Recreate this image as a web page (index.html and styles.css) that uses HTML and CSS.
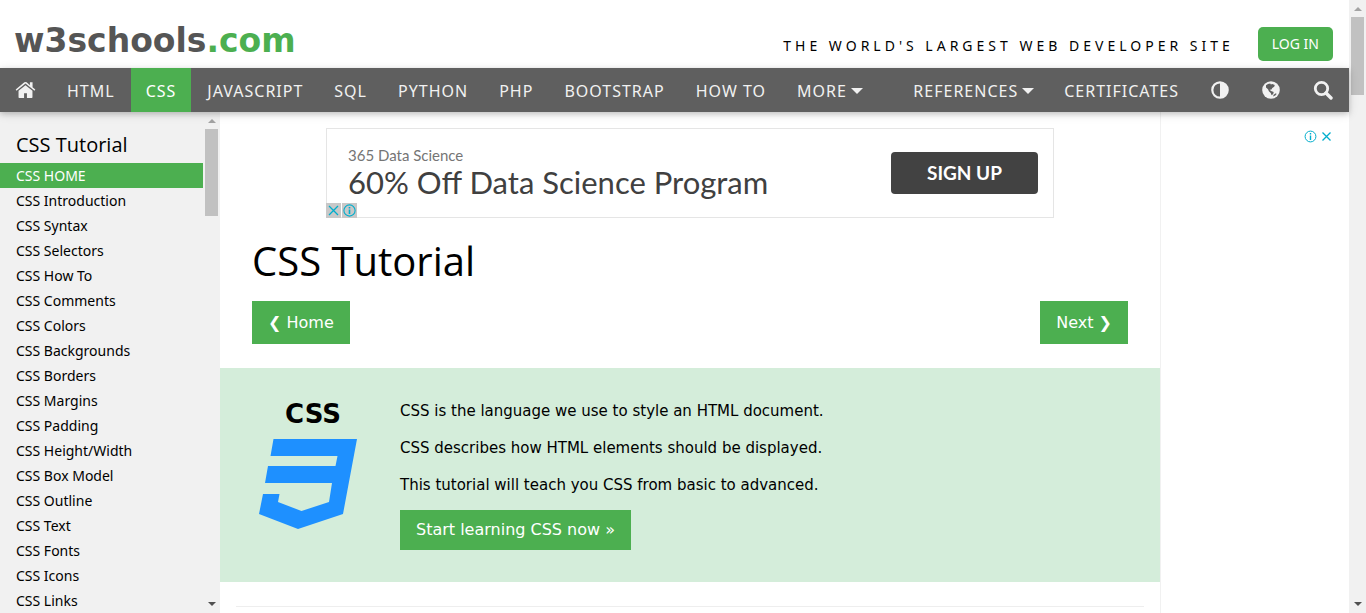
FILE: index.html
```
<!DOCTYPE html>
<html lang="en">
<head>
<meta charset="utf-8">
<title>CSS Tutorial</title>
<link rel="stylesheet" href="styles.css">
</head>
<body>
<div class="window">
  <div class="page">
    <header class="header">
      <a class="logo" href="#">w3schools<span class="logo-dot">.com</span></a>
      <div class="header-right">
        <span class="tagline">THE WORLD'S LARGEST WEB DEVELOPER SITE</span>
        <button class="login" type="button">LOG IN</button>
      </div>
    </header>

    <nav class="topnav" aria-label="Main">
      <div class="nav-group sections">
        <a class="nav-icon" href="#" aria-label="Home"><svg width="21" height="18" viewBox="0 0 22 18" fill="currentColor"><path d="M11 3.900 3.700 9.900v6.700q0 .8.8.8h5v-5h3v5h5q.8 0 .8-.8V9.900z"/><path d="M21.300 8.600 18.400 6.200V1h-2.800v2.900L12.200 1Q11 .1 9.800 1L.7 8.600l.9 1.200L11 2.100l9.400 7.700z"/></svg></a>
        <a href="#">HTML</a>
        <a class="current" href="#">CSS</a>
        <a href="#">JAVASCRIPT</a>
        <a href="#">SQL</a>
        <a href="#">PYTHON</a>
        <a href="#">PHP</a>
        <a href="#">BOOTSTRAP</a>
        <a href="#">HOW TO</a>
        <a href="#">MORE<span class="caret"></span></a>
      </div>
      <div class="nav-group">
        <a href="#">REFERENCES<span class="caret"></span></a>
        <a href="#">CERTIFICATES</a>
        <a class="nav-icon wide" href="#" aria-label="Contrast"><svg width="18" height="18" viewBox="0 0 18 18"><circle cx="9" cy="9" r="7.700" fill="none" stroke="currentColor" stroke-width="2.200"/><path d="M9 1.500a7.500 7.500 0 0 1 0 15z" fill="currentColor"/></svg></a>
        <a class="nav-icon wide" href="#" aria-label="Translate"><svg width="18" height="18" viewBox="0 0 18 18"><circle cx="9" cy="9" r="8.800" fill="currentColor"/><path class="land" d="M4 4.200 6 3l2.200-.6.700 1.100L10.300 3l2.500 1-.6 1.700-1.900 1.300-.8 1.500-1.900.3 1.500 1.300 2.600.9-.5 1.900-1.600 1.300-.9-2.300-1.800-1.600-.9-2L4 6.600zM11.600 13.800l2.300-1.600.7.900-1.300 1.500-2.200 1z"/></svg></a>
        <a class="nav-icon wide" href="#" aria-label="Search"><svg width="20" height="20" viewBox="0 0 20 20" fill="none" stroke="currentColor"><circle cx="8.500" cy="8.500" r="6.200" stroke-width="2.800"/><path d="m13 13 5 5" stroke-width="3.400" stroke-linecap="round"/></svg></a>
      </div>
    </nav>

    <div class="body">
      <aside class="sidebar">
        <div class="menu">
          <h2>CSS Tutorial</h2>
          <ul>
            <li><a class="selected" href="#">CSS HOME</a></li>
            <li><a href="#">CSS Introduction</a></li>
            <li><a href="#">CSS Syntax</a></li>
            <li><a href="#">CSS Selectors</a></li>
            <li><a href="#">CSS How To</a></li>
            <li><a href="#">CSS Comments</a></li>
            <li><a href="#">CSS Colors</a></li>
            <li><a href="#">CSS Backgrounds</a></li>
            <li><a href="#">CSS Borders</a></li>
            <li><a href="#">CSS Margins</a></li>
            <li><a href="#">CSS Padding</a></li>
            <li><a href="#">CSS Height/Width</a></li>
            <li><a href="#">CSS Box Model</a></li>
            <li><a href="#">CSS Outline</a></li>
            <li><a href="#">CSS Text</a></li>
            <li><a href="#">CSS Fonts</a></li>
            <li><a href="#">CSS Icons</a></li>
            <li><a href="#">CSS Links</a></li>
          </ul>
        </div>
        <div class="scrollbar"><span class="arrow up"></span><span class="thumb"></span><span class="arrow down"></span></div>
      </aside>

      <div class="columns">
        <main class="content">
          <section class="ad" aria-label="Advertisement">
            <div class="ad-copy">
              <p class="ad-brand">365 Data Science</p>
              <p class="ad-title">60% Off Data Science Program</p>
            </div>
            <button class="ad-button" type="button">SIGN UP</button>
            <div class="ad-badges">
              <svg width="15" height="15" viewBox="0 0 15 15" fill="none" stroke="currentColor" stroke-width="1.300"><path d="m3 3 9 9M12 3l-9 9"/></svg>
              <svg width="15" height="15" viewBox="0 0 15 15" fill="none" stroke="currentColor"><circle cx="7.500" cy="7.500" r="5.600" stroke-width="1.100"/><path d="M7.500 6.500v4.500M7.500 4v1.400" stroke-width="1.600"/></svg>
            </div>
          </section>

          <h1>CSS Tutorial</h1>
          <div class="pager">
            <a class="button" href="#">❮ Home</a>
            <a class="button" href="#">Next ❯</a>
          </div>

          <section class="intro">
            <div class="badge">
              <span class="badge-name">CSS</span>
              <svg width="98" height="90" viewBox="0 0 98 90" fill="#1e90ff"><path d="M14.500 0H98L84 75 39 90 0 75 4 55h16.500l-1.500 8 23.500 9 27.500-9 3-19H6l3-17h67.500l2-10H11.500z"/></svg>
            </div>
            <div class="intro-text">
              <p>CSS is the language we use to style an HTML document.</p>
              <p>CSS describes how HTML elements should be displayed.</p>
              <p>This tutorial will teach you CSS from basic to advanced.</p>
              <a class="button start" href="#">Start learning CSS now »</a>
            </div>
          </section>
          <hr>
        </main>
        <aside class="right">
          <svg width="13" height="13" viewBox="0 0 13 13" fill="none" stroke="currentColor"><circle cx="6.500" cy="6.500" r="5.400"/><path d="M6.500 5.500V10M6.500 3v1.400" stroke-width="1.400"/></svg>
          <svg width="11" height="13" viewBox="0 0 11 13" fill="none" stroke="currentColor" stroke-width="1.300"><path d="m1.500 2.500 8 8M9.500 2.500l-8 8"/></svg>
        </aside>
      </div>
    </div>
  </div>
  <div class="scrollbar"><span class="arrow up"></span><span class="thumb"></span><span class="arrow down"></span></div>
</div>
</body>
</html>
```
FILE: styles.css
```
* { box-sizing: border-box; }
body {
  margin: 0;
  color: #000;
  background: #fff;
  font: 15px/22px "DejaVu Sans", Verdana, sans-serif;
}
a { color: inherit; text-decoration: none; }
p, h1, h2, ul { margin: 0; padding: 0; }
ul { list-style: none; }
button { border: 0; cursor: pointer; }
svg { display: block; }

.window { display: flex; height: 100vh; overflow: hidden; }
.page { flex: 1; min-width: 0; display: flex; flex-direction: column; }

.scrollbar {
  flex: none;
  width: 17px;
  background: #f1f1f1;
  display: flex;
  flex-direction: column;
  align-items: center;
}
.arrow { border: 4px solid transparent; margin: 4px 0 6px; }
.arrow.up { border-bottom-color: #a3a3a3; border-top-width: 3px; }
.arrow.down { border-top-color: #505050; margin: auto 0 3px; }
.thumb { width: 13px; height: 87px; background: #c1c1c1; }
.window > .scrollbar .thumb { height: 78px; }

.header {
  height: 68px;
  padding: 14px 16px 0 14px;
  display: flex;
  justify-content: space-between;
}
.logo { color: #555; font: bold 33px/54px "DejaVu Sans", Verdana, sans-serif; }
.logo-dot { color: #4caf50; }
.header-right { display: flex; align-items: center; gap: 24px; padding-top: 6px; }
.tagline { font: 14px/20px "Noto Sans", "Segoe UI", sans-serif; letter-spacing: 4px; padding-top: 3px; }
.login {
  height: 34px;
  padding: 0 14px;
  border-radius: 5px;
  color: #fff;
  background: #4caf50;
  font: 14px/20px "Noto Sans", "Segoe UI", sans-serif;
}

.topnav {
  position: relative;
  z-index: 1;
  height: 44px;
  flex: none;
  display: flex;
  justify-content: space-between;
  color: #f1f1f1;
  background: #5f5f5f;
  box-shadow: 0 2px 5px rgba(0, 0, 0, .16), 0 2px 10px rgba(0, 0, 0, .12);
  font: 16px/24px "Noto Sans", "Segoe UI", sans-serif;
  letter-spacing: 1px;
}
.nav-group { display: flex; }
.sections { gap: 1px; }
.nav-group a { display: flex; align-items: center; padding: 1px 15px 0; white-space: nowrap; }
.nav-group .nav-icon { padding: 0 15px; }
.nav-group .wide { padding: 0 16px 0 17px; }
.nav-group .current { color: #fff; background: #4caf50; }
.land { fill: #5f5f5f; }
.caret { border: 6px solid transparent; border-top-color: currentColor; border-bottom: 0; margin-left: 4px; }

.body { flex: 1; min-height: 0; display: flex; }
.sidebar { flex: none; width: 220px; display: flex; overflow: hidden; background: #f1f1f1; }
.menu { flex: 1; padding-top: 19px; font: 14px/25px "Noto Sans", "Segoe UI", sans-serif; }
.menu h2 { padding: 0 16px; margin-bottom: 4px; font: 20px/28px "Open Sans", "Segoe UI", sans-serif; }
.menu a { display: block; padding: 1px 16px 0; line-height: 24px; }
.menu .selected { color: #fff; background: #4caf50; }

.columns { flex: 1; min-width: 0; display: grid; grid-template-columns: minmax(0, 940fr) minmax(0, 189fr); }
.content { padding-top: 16px; }
.right {
  border-left: 1px solid #f1f1f1;
  padding: 18px 17px 0 0;
  display: flex;
  justify-content: flex-end;
  gap: 4px;
  color: #00aecd;
}

.ad {
  position: relative;
  max-width: 728px;
  height: 90px;
  margin: 0 auto;
  padding: 0 15px 0 21px;
  border: 1px solid #e5e5e5;
  display: flex;
  align-items: center;
  justify-content: space-between;
  font-family: Lato, "Google Sans", sans-serif;
}
.ad-copy { padding-bottom: 2px; }
.ad-brand { color: #757575; font-size: 15px; line-height: 20px; }
.ad-title { color: #404040; font-size: 31px; line-height: 34px; }
.ad-button {
  width: 147px;
  height: 42px;
  border-radius: 4px;
  color: #fff;
  background: #424242;
  font: bold 19px/24px Lato, "Google Sans", sans-serif;
}
.ad-badges { position: absolute; left: -1px; bottom: -1px; display: flex; gap: 1px; color: #00aecd; }
.ad-badges svg { background: #c8c8c8; }

h1 { padding: 0 32px; margin: 11px 0 9px; font: 40px/63px "Open Sans", "Segoe UI", sans-serif; }
.pager { display: flex; justify-content: space-between; padding: 0 32px; margin-bottom: 24px; }
.button { display: inline-block; padding: 10px 16px; color: #fff; background: #4caf50; font-size: 16px; line-height: 23px; }

.intro { display: flex; gap: 43px; padding: 32px 32px 32px 39px; background: #d4edda; }
.badge { display: flex; flex-direction: column; align-items: center; }
.badge-name { font: bold 26px/28px "DejaVu Sans", Verdana, sans-serif; margin-bottom: 11px; padding-left: 10px; }
.intro-text p { margin-bottom: 15px; }
.intro-text p:last-of-type { margin-bottom: 14px; }
.start { padding: 9px 16px; line-height: 22px; }
hr { margin: 24px 16px; border: 0; border-top: 1px solid #eee; }
```
